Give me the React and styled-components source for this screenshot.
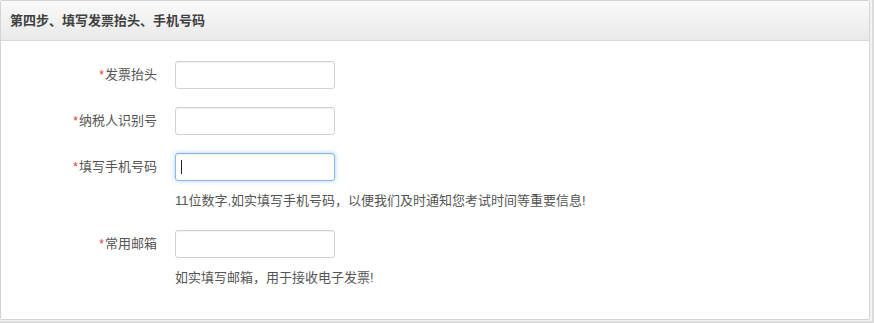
import React from 'react';
import styled, { createGlobalStyle } from 'styled-components';

const GlobalStyle = createGlobalStyle`
  html, body {
    margin: 0;
    padding: 0;
    background: #fff;
  }
  body {
    font-family: "Liberation Sans", Arial, "Noto Sans CJK SC", sans-serif;
  }
`;

const Page = styled.div`
  width: 874px;
  height: 323px;
  box-sizing: border-box;
  padding-right: 2px;
  border-right: 2px solid #dcdcdc;
  border-bottom: 2px solid #dcdcdc;
  background: #f4f4f4;
`;

const Panel = styled.div`
  width: 870px;
  height: 320px;
  box-sizing: border-box;
  border: 1px solid #d4d4d4;
  border-radius: 2px;
  background: #fff;
`;

const PanelHeader = styled.div`
  height: 40px;
  box-sizing: border-box;
  display: flex;
  align-items: center;
  padding: 0 9px 2px;
  border-bottom: 1px solid #dadada;
  background: linear-gradient(to bottom, #fafafa 0%, #e9e9e9 100%);
  font-size: 13px;
  font-weight: bold;
  color: #3f3f3f;
`;

const Form = styled.div`
  display: grid;
  grid-template-columns: 156px 160px;
  column-gap: 18px;
  row-gap: 18px;
  padding-top: 20px;
  align-items: center;
`;

const Label = styled.label`
  text-align: right;
  font-size: 13px;
  color: #555;
  line-height: 28px;
`;

const Star = styled.span`
  color: #e23a2e;
  font-size: 12px;
  margin-right: 1px;
`;

const Field = styled.div`
  position: relative;
  height: 28px;
`;

const Input = styled.input`
  display: block;
  width: 160px;
  height: 28px;
  box-sizing: border-box;
  border-radius: 3px;
  border: 1px solid ${p => (p.$focused ? '#87b8e8' : '#d2d2d2')};
  box-shadow: ${p =>
    p.$focused
      ? 'inset 0 1px 1px rgba(0,0,0,.075), 0 0 5px rgba(102,175,233,.55)'
      : 'inset 0 1px 1px rgba(0,0,0,.06)'};
  outline: none;
  padding: 0 6px;
  font-size: 13px;
  background: #fff;
`;

const Caret = styled.span`
  position: absolute;
  left: 6px;
  top: 7px;
  width: 1px;
  height: 14px;
  background: #222;
`;

const Help = styled.div`
  grid-column: 2 / 3;
  width: 600px;
  font-size: 13px;
  color: #555;
  line-height: 20px;
  margin-top: -8px;
  margin-bottom: 1px;
`;

const rows = [
  { label: '发票抬头' },
  { label: '纳税人识别号' },
  {
    label: '填写手机号码',
    focused: true,
    help: '11位数字,如实填写手机号码，以便我们及时通知您考试时间等重要信息!',
  },
  { label: '常用邮箱', help: '如实填写邮箱，用于接收电子发票!' },
];

export default function App() {
  return (
    <>
      <GlobalStyle />
      <Page>
        <Panel>
          <PanelHeader>第四步、填写发票抬头、手机号码</PanelHeader>
          <Form>
            {rows.map(row => (
              <React.Fragment key={row.label}>
                <Label>
                  <Star>*</Star>
                  {row.label}
                </Label>
                <Field>
                  <Input type="text" $focused={row.focused} />
                  {row.focused && <Caret />}
                </Field>
                {row.help && <Help>{row.help}</Help>}
              </React.Fragment>
            ))}
          </Form>
        </Panel>
      </Page>
    </>
  );
}
